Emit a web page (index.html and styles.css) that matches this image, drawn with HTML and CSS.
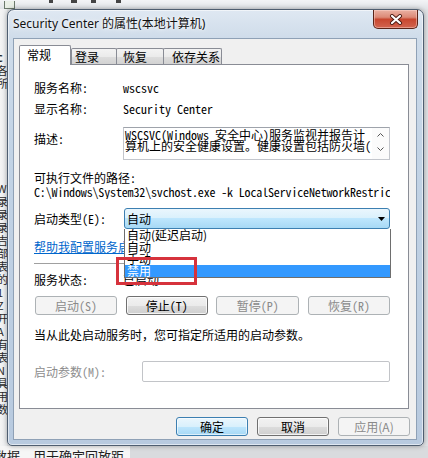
FILE: index.html
```html
<!DOCTYPE html>
<html lang="zh-CN">
<head>
<meta charset="utf-8">
<title>Security Center 的属性</title>
<link rel="stylesheet" href="styles.css">
</head>
<body>
<div class="screen">
  <div class="bg-top">
    <span class="tb-icon"></span>
    <span class="tb-bit b1"></span>
    <span class="tb-bit b2"></span>
    <span class="tb-bit b3"></span>
    <span class="tb-bit b4"></span>
  </div>
  <div class="bg-left">
    <span class="g-first">c</span><span>各</span><span>所</span>
    <span class="g-gap">W</span><span>录</span><span>录</span><span>录</span><span>吉</span><span>部</span><span>表</span><span>的</span><span>1</span><span>Z</span><span>开</span><span>A</span><span>有</span><span>表</span><span>N</span><span>具</span><span>用</span><span>数</span>
  </div>
  <div class="bg-main"></div>
  <div class="bg-bottom"><span class="bg-text">数据，用于确定回放距</span></div>

  <div class="window">
    <div class="titlebar">
      <span class="title">Security Center 的属性(本地计算机)</span>
      <div class="close">
        <svg width="14" height="11" viewBox="0 0 14 11">
          <path d="M3 2 L11 9 M11 2 L3 9" stroke="#4a1a12" stroke-width="4" stroke-linecap="round"/>
          <path d="M3 2 L11 9 M11 2 L3 9" stroke="#ffffff" stroke-width="2.2" stroke-linecap="round"/>
        </svg>
      </div>
    </div>
    <div class="client">
      <div class="tabs">
        <div class="tab active t1">常规</div>
        <div class="tab t2">登录</div>
        <div class="tab t3">恢复</div>
        <div class="tab t4">依存关系</div>
      </div>
      <div class="panel">
        <div class="row r-name"><span class="label">服务名称:</span><span class="value">wscsvc</span></div>
        <div class="row r-disp"><span class="label">显示名称:</span><span class="value">Security Center</span></div>
        <div class="row r-desc">
          <span class="label desc-label">描述:</span>
          <div class="desc-box">
            <div class="desc-text">WSCSVC(Windows 安全中心)服务监视并报告计<br>算机上的安全健康设置。健康设置包括防火墙(</div>
            <div class="scroll">
              <svg width="7" height="4" viewBox="0 0 7 4"><path d="M0.5 3.5 L3.5 0.5 L6.5 3.5" fill="none" stroke="#555" stroke-width="1"/></svg>
              <svg width="7" height="4" viewBox="0 0 7 4"><path d="M0.5 0.5 L3.5 3.5 L6.5 0.5" fill="none" stroke="#555" stroke-width="1"/></svg>
            </div>
          </div>
        </div>
        <div class="row r-pathlabel"><span>可执行文件的路径:</span></div>
        <div class="row r-path"><span class="path">C:\Windows\System32\svchost.exe -k LocalServiceNetworkRestricted</span></div>
        <div class="row r-type">
          <span class="label">启动类型(E):</span>
          <div class="select">
            <span class="select-text">自动</span>
            <svg class="arrow" width="7" height="4" viewBox="0 0 7 4"><path d="M0 0 H7 L3.5 4 Z" fill="#000"/></svg>
            <div class="dropdown">
              <div class="dd-item">自动(延迟启动)</div>
              <div class="dd-item">自动</div>
              <div class="dd-item">手动</div>
              <div class="dd-item sel">禁用</div>
            </div>
          </div>
        </div>
        <div class="row r-link"><a class="link" href="#">帮助我配置服务启动选项。</a></div>
        <div class="sep"></div>
        <div class="row r-status"><span class="label">服务状态:</span><span class="value-cjk">已启动</span></div>
        <div class="svc-buttons">
          <div class="btn disabled w82">启动(S)</div>
          <div class="btn w82">停止(T)</div>
          <div class="btn disabled w83">暂停(P)</div>
          <div class="btn disabled w82">恢复(R)</div>
        </div>
        <div class="row r-note"><span>当从此处启动服务时，您可指定所适用的启动参数。</span></div>
        <div class="row r-param">
          <span class="label param-label">启动参数(M):</span>
          <div class="param-input"></div>
        </div>
        <div class="mark"></div>
      </div>
      <div class="dialog-buttons">
        <div class="btn default dbtn">确定</div>
        <div class="btn dbtn">取消</div>
        <div class="btn disabled dbtn">应用(A)</div>
      </div>
    </div>
  </div>
</div>
</body>
</html>
```

FILE: styles.css
```css
* { box-sizing: border-box; margin: 0; padding: 0; }
html, body { width: 428px; height: 458px; overflow: hidden; }
body {
  font-family: "Noto Sans CJK SC", sans-serif;
  font-size: 12px;
  color: #000;
  background: #e4e6e9;
}

/* ---------- desktop / underlying app ---------- */
.screen {
  position: relative;
  width: 428px;
  height: 458px;
  display: grid;
  grid-template-rows: 9px 1fr 12px;
  grid-template-columns: 7px 1fr;
  overflow: hidden;
  background: #e2e4e7;
}
.bg-top {
  grid-column: 1 / 3;
  background: linear-gradient(#f3f4f6, #e1e4e8);
  position: relative;
  display: flex;
  align-items: flex-end;
  gap: 14px;
  padding-left: 4px;
}
.tb-icon {
  width: 11px;
  height: 8px;
  border: 1px solid #6c7a6c;
  border-top: 0;
  background: #e9efe6;
}
.tb-bit { height: 3px; background: #444; margin-bottom: 6px; }
.b1 { width: 4px; margin-left: 20px; }
.b2 { width: 6px; margin-left: 4px; }
.b3 { width: 5px; }
.b4 { width: 5px; margin-left: 6px; }

.bg-left {
  background: linear-gradient(90deg, #f4f4f4 0, #eceef0 100%);
  overflow: hidden;
  display: flex;
  flex-direction: column;
  font-size: 11px;
  line-height: 13px;
  color: #2a2a2a;
}
.bg-left span { display: block; height: 13px; margin-left: -3px; white-space: nowrap; }
.bg-left .g-first { margin-top: 42px; font-weight: bold; }
.bg-left .g-gap { margin-top: 92px; }
.bg-main { background: #e0e2e5; }
.bg-bottom {
  grid-column: 1 / 3;
  background: linear-gradient(90deg, #f6f6f6 0, #f6f6f6 130px, #d9dbde 130px);
  overflow: hidden;
  position: relative;
}
.bg-text {
  display: block;
  margin-left: -6px;
  margin-top: 3px;
  font-size: 13px;
  line-height: 14px;
  color: #222;
  white-space: nowrap;
}

/* ---------- window ---------- */
.window {
  position: absolute;
  left: 7px;
  top: 9px;
  width: 417px;
  height: 437px;
  display: flex;
  flex-direction: column;
  border: 1px solid #4f5e70;
  border-radius: 7px 7px 5px 5px;
  background: linear-gradient(180deg, #dfe8f2 0, #cfdcea 28px, #c2d3e5 140px, #b8cadf 100%);
  box-shadow: inset 0 0 0 1px rgba(255,255,255,0.55), 0 0 5px rgba(0,0,0,0.35);
}
.titlebar {
  flex: none;
  height: 28px;
  display: flex;
  align-items: center;
  padding-left: 5px;
}
.title {
  font-family: "Noto Sans", "Noto Sans CJK SC", sans-serif;
  font-size: 12px;
  line-height: 16px;
  color: #111;
  text-shadow: 0 0 6px rgba(255,255,255,0.95), 0 0 3px rgba(255,255,255,0.9);
  white-space: nowrap;
}
.close {
  margin-left: auto;
  margin-right: 5px;
  align-self: flex-start;
  width: 45px;
  height: 19px;
  border: 1px solid #5a2418;
  border-top: 0;
  border-radius: 0 0 5px 5px;
  background: linear-gradient(#eab1a3 0, #dc8a77 40%, #c8472f 52%, #d26550 100%);
  box-shadow: inset 0 0 0 1px rgba(255,220,210,0.45);
  display: flex;
  align-items: center;
  justify-content: center;
}

.client {
  flex: 1;
  margin: 0 6px 5px 5px;
  background: #f0f0f0;
  border: 1px solid #8fa1b6;
  padding: 6px 7px 0 5px;
  display: flex;
  flex-direction: column;
}

/* ---------- tabs ---------- */
.tabs {
  height: 19px;
  display: flex;
  align-items: flex-end;
  position: relative;
  z-index: 2;
}
.tab {
  height: 16px;
  border: 1px solid #898c95;
  border-bottom: 0;
  border-radius: 2px 2px 0 0;
  background: linear-gradient(#f3f3f3 0, #ebebeb 50%, #dedede 50%, #d2d2d2 100%);
  line-height: 15px;
  font-size: 12px;
  white-space: nowrap;
}
.tab.active {
  height: 20px;
  margin-bottom: -1px;
  background: #fff;
  line-height: 18px;
}
.t1 { width: 52px; padding-left: 7px; }
.t2 { width: 46px; padding-left: 3px; }
.t3 { width: 48px; padding-left: 6px; margin-left: -1px; }
.t4 { width: 59px; padding-left: 8px; margin-left: -1px; }

/* ---------- panel ---------- */
.panel {
  position: relative;
  height: 345px;
  background: #fff;
  border: 1px solid #898c95;
  padding: 0 18px 0 14px;
  font-family: "Noto Sans Mono CJK SC", "Noto Sans CJK SC", monospace;
  font-size: 12px;
  line-height: 14px;
}
.row { display: flex; align-items: center; white-space: nowrap; }
.label { width: 89px; flex: none; }
.value { font-family: "Noto Sans Mono CJK SC", "Liberation Mono", monospace; }
.r-name { margin-top: 16px; height: 14px; }
.r-disp { margin-top: 7px; height: 14px; }
.r-desc { margin-top: 11px; height: 33px; align-items: flex-start; }
.desc-label { padding-top: 5px; }
.desc-box {
  width: 267px;
  height: 33px;
  border: 1px solid #c3c6cc;
  border-top-color: #9ea3ab;
  display: flex;
  background: #fff;
}
.desc-text {
  flex: 1;
  padding: 1px 0 0 1px;
  line-height: 11px;
  overflow: hidden;
  white-space: nowrap;
}
.scroll {
  width: 17px;
  flex: none;
  display: flex;
  flex-direction: column;
  justify-content: space-between;
  align-items: center;
  padding: 5px 0 8px;
  background: #fbfbfb;
}
.r-pathlabel { margin-top: 11px; height: 14px; }
.r-path { margin-top: 0; height: 14px; }
.path { display: block; width: 356px; overflow: hidden; letter-spacing: -0.15px; }
.r-type { margin-top: 9px; height: 21px; }
.select {
  position: relative;
  width: 267px;
  height: 21px;
  margin-left: 1px;
  border: 1px solid #3c7fb1;
  border-radius: 3px;
  background: linear-gradient(#eaf6fd 0, #d9f0fc 50%, #bee6fd 50%, #a7d9f5 100%);
  display: flex;
  align-items: center;
  padding-left: 2px;
  font-family: "Noto Sans CJK SC", sans-serif;
}
.select-text { line-height: 16px; }
.arrow { margin-left: auto; margin-right: 4px; }
.dropdown {
  position: absolute;
  left: -1px;
  top: calc(100% + 1px);
  width: 267px;
  height: 49px;
  border: 1px solid #6e6e6e;
  border-top: 0;
  background: #fff;
  z-index: 3;
  font-family: "Noto Sans CJK SC", sans-serif;
}
.dd-item {
  height: 12px;
  line-height: 12px;
  padding-left: 2px;
  overflow: visible;
}
.dd-item.sel { background: #3399ff; color: #fff; }
.r-link { margin-top: 11px; height: 14px; }
.link { color: #0066cc; text-decoration: underline; }
.sep { margin-top: 9px; height: 1px; background: #a0a0a0; }
.r-status { margin-top: 9px; height: 14px; }
.svc-buttons {
  margin-top: 9px;
  display: flex;
  justify-content: space-between;
  padding-left: 1px;
}
.btn {
  height: 19px;
  border: 1px solid #707070;
  border-radius: 3px;
  background: linear-gradient(#f2f2f2 0, #ebebeb 50%, #dddddd 50%, #cfcfcf 100%);
  box-shadow: inset 0 0 0 1px rgba(255,255,255,0.75);
  text-align: center;
  line-height: 17px;
  font-size: 12px;
  white-space: nowrap;
}
.btn.disabled {
  border-color: #adb2b5;
  background: #f4f4f4;
  color: #8a8a8a;
  box-shadow: none;
}
.btn.default {
  border-color: #3c7fb1;
  background: linear-gradient(#eaf6fd 0, #d9f0fc 50%, #bee6fd 50%, #a7d9f5 100%);
  box-shadow: inset 0 0 0 1px rgba(255,255,255,0.6);
}
.w82 { width: 82px; }
.w83 { width: 83px; }
.r-note { margin-top: 13px; height: 14px; }
.r-param { margin-top: 19px; height: 21px; }
.param-label { width: 108px; color: #8d8d8d; }
.param-input {
  width: 249px;
  height: 21px;
  border: 1px solid #c2c4c8;
  border-radius: 2px;
  background: #fff;
}
.mark {
  position: absolute;
  left: 96px;
  top: 192px;
  width: 81px;
  height: 28px;
  border: 3px solid #d6323c;
  z-index: 4;
}

/* ---------- dialog buttons ---------- */
.dialog-buttons {
  margin-top: 8px;
  display: flex;
  justify-content: flex-end;
  gap: 9px;
  margin-right: -1px;
  font-family: "Noto Sans CJK SC", sans-serif;
}
.dbtn { width: 72px; }
```
